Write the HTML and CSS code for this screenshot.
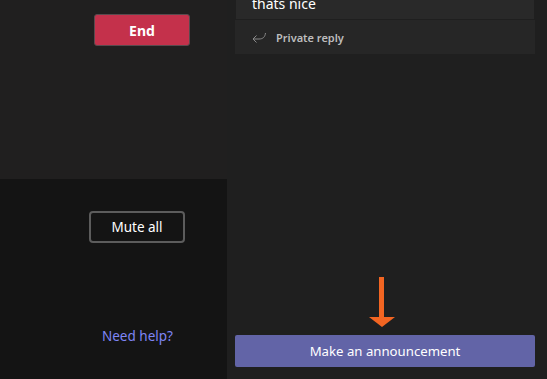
FILE: index.html
```html
<!DOCTYPE html>
<html lang="en">
<head>
    <meta charset="UTF-8">
    <title>Meeting controls</title>
    <link rel="stylesheet" href="styles.css">
</head>
<body>
    <div class="layout">
        <div class="left">
            <div class="top-pane">
                <button class="end-btn">End</button>
            </div>
            <div class="bottom-pane">
                <button class="mute-btn">Mute all</button>
                <a class="help-link" href="#">Need help?</a>
            </div>
        </div>
        <div class="right">
            <div class="message">
                <div class="message-body">thats nice</div>
                <div class="reply">
                    <svg class="reply-icon" width="14" height="11" viewBox="0 0 14 11">
                        <path d="M13.5 1 C13 5 11 7 7 7 L1 7 M4.5 3.5 L1 7 L4.5 10.5" fill="none" stroke="#8a8a8a" stroke-width="1"/>
                    </svg>
                    <span>Private reply</span>
                </div>
            </div>
            <div class="spacer"></div>
            <div class="arrow">
                <div class="arrow-shaft"></div>
                <div class="arrow-head"></div>
            </div>
            <button class="announce-btn">Make an announcement</button>
        </div>
    </div>
</body>
</html>
```

FILE: styles.css
```css
* {
    margin: 0;
    padding: 0;
    box-sizing: border-box;
}

body {
    font-family: 'Segoe UI', 'Noto Sans', sans-serif;
    background: #1f1f1f;
    width: 547px;
    height: 379px;
    overflow: hidden;
}

.layout {
    display: flex;
    height: 379px;
}

.left {
    width: 227px;
    flex-shrink: 0;
    display: flex;
    flex-direction: column;
}

.top-pane {
    height: 179px;
    background: #201f1f;
    padding: 14px 0 0 94px;
}

.end-btn {
    width: 96px;
    height: 32px;
    background: #c4314b;
    border: 1px solid #5a4a4e;
    border-radius: 3px;
    color: #fff;
    font-family: inherit;
    font-size: 14px;
    font-weight: 700;
}

.bottom-pane {
    flex: 1;
    background: #141414;
    display: flex;
    flex-direction: column;
    align-items: flex-start;
    padding: 32px 0 0 89px;
}

.mute-btn {
    width: 96px;
    height: 32px;
    background: transparent;
    border: 2px solid #5c5c5c;
    border-radius: 4px;
    color: #fff;
    font-family: inherit;
    font-size: 13.5px;
}

.help-link {
    margin: 84px 0 0 13px;
    color: #7f85f5;
    font-size: 13.5px;
    text-decoration: none;
}

.right {
    flex: 1;
    display: flex;
    flex-direction: column;
    padding: 0 12px 12px 8px;
}

.message {
    margin-top: -10px;
}

.message-body {
    margin: 0 1px;
    background: #292929;
    padding: 4px 16px 3px;
    height: 30px;
    color: #fff;
    font-size: 14px;
    border-bottom: 1px solid #1f1f1f;
}

.reply {
    height: 34px;
    background: #262626;
    display: flex;
    align-items: center;
    padding-left: 17px;
    gap: 10px;
    color: #bdbdbd;
    font-size: 11px;
    font-weight: 600;
}

.reply-icon {
    margin-top: 1px;
}

.spacer {
    flex: 1;
}

.arrow {
    display: flex;
    flex-direction: column;
    align-items: center;
    margin: 0 7px 8px 0;
}

.arrow-shaft {
    width: 5px;
    height: 40px;
    background: #f26522;
}

.arrow-head {
    width: 0;
    height: 0;
    border-left: 13px solid transparent;
    border-right: 13px solid transparent;
    border-top: 10px solid #f26522;
}

.announce-btn {
    height: 32px;
    width: 300px;
    background: #6264a7;
    border: none;
    border-radius: 2px;
    color: #fff;
    font-family: inherit;
    font-size: 13.2px;
}
```
